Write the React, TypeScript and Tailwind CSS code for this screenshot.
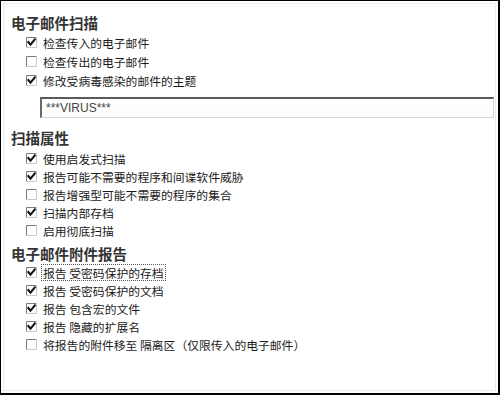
import React from "react";

const Box = ({ checked }: { checked: boolean }) => (
  <svg width="11" height="11" viewBox="0 0 11 11" className="shrink-0">
    <rect x="0" y="0" width="11" height="11" fill="#ffffff" />
    <path d="M0.5 10.5 V0.5 H10.5" fill="none" stroke="#7a7a7a" strokeWidth="1" />
    <path d="M10.5 0.5 V10.5 H0.5" fill="none" stroke="#c8c8c8" strokeWidth="1" />
    {checked && (
      <path d="M2.4 5.1 L4.5 7.7 L8.8 2.5" fill="none" stroke="#111" strokeWidth="2.1" strokeLinecap="square" />
    )}
  </svg>
);

const Row = ({ checked, label, h, focus }: { checked: boolean; label: string; h: string; focus?: boolean }) => (
  <div className={`flex items-center pl-[22px] ${h}`}>
    <Box checked={checked} />
    <span
      className={`ml-[4px] text-[11.8px] leading-[15px] text-[#1a1a1a] whitespace-pre ${
        focus ? "border border-dotted border-[#555] px-px" : "border border-transparent px-px"
      }`}
    >
      {label}
    </span>
  </div>
);

const Heading = ({ children, mt }: { children: React.ReactNode; mt: string }) => (
  <div className={`pl-[7px] h-[18px] flex items-center text-[14.5px] font-bold text-[#333] ${mt}`}>{children}</div>
);

export default function App() {
  return (
    <div
      className="w-[500px] h-[395px] bg-white border-t border-l border-r-2 border-b-2 border-black overflow-hidden"
      style={{ fontFamily: '"Noto Sans CJK SC", "Noto Sans", sans-serif' }}
    >
      <div className="h-[388px] m-[2px] border border-[#ececec] flex flex-col">
        <Heading mt="mt-[10px]">电子邮件扫描</Heading>
        <div className="mt-[1px] flex flex-col">
          <Row checked label="检查传入的电子邮件" h="h-[19px]" />
          <Row checked={false} label="检查传出的电子邮件" h="h-[19px]" />
          <Row checked label="修改受病毒感染的邮件的主题" h="h-[19px]" />
        </div>
        <div className="mt-[7px] ml-[36px] mr-[1px] h-[21px] border-t-2 border-l-2 border-r border-b border-t-[#5a5a5a] border-l-[#6a6a6a] border-r-[#d8d8d8] border-b-[#d8d8d8] bg-[#fefefc] flex items-center pl-[4px]">
          <span className="text-[12px] text-[#444]" style={{ fontFamily: '"Liberation Sans", Arial, sans-serif' }}>
            ***VIRUS***
          </span>
        </div>
        <Heading mt="mt-[11px]">扫描属性</Heading>
        <div className="mt-[2px] flex flex-col">
          <Row checked label="使用启发式扫描" h="h-[18px]" />
          <Row checked label="报告可能不需要的程序和间谍软件威胁" h="h-[18px]" />
          <Row checked={false} label="报告增强型可能不需要的程序的集合" h="h-[18px]" />
          <Row checked label="扫描内部存档" h="h-[18px]" />
          <Row checked={false} label="启用彻底扫描" h="h-[18px]" />
        </div>
        <Heading mt="mt-[6px]">电子邮件附件报告</Heading>
        <div className="flex flex-col">
          <Row checked label="报告 受密码保护的存档" h="h-[18px]" focus />
          <Row checked label="报告 受密码保护的文档" h="h-[18px]" />
          <Row checked label="报告 包含宏的文件" h="h-[18px]" />
          <Row checked label="报告 隐藏的扩展名" h="h-[18px]" />
          <Row checked={false} label="将报告的附件移至 隔离区（仅限传入的电子邮件）" h="h-[18px]" />
        </div>
      </div>
    </div>
  );
}
